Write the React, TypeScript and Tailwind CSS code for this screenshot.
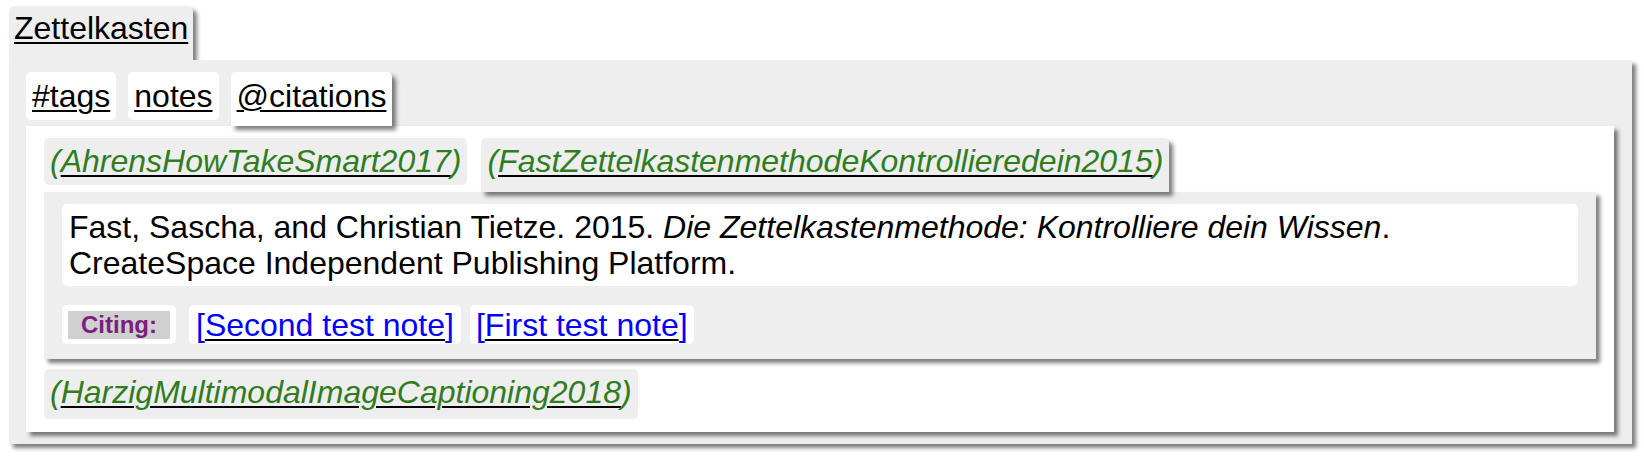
import React from "react";

const green = "text-[#2f7d1f]";

function CiteLabel({ name }: { name: string }) {
  return (
    <span className={`italic ${green}`}>
      <span>(</span>
      <span className="underline decoration-black decoration-2 underline-offset-[3px]">{name}</span>
      <span>)</span>
    </span>
  );
}

function NoteLink({ name }: { name: string }) {
  return (
    <span className="text-[#0000ff]">
      <span>[</span>
      <span className="underline decoration-black decoration-2 underline-offset-[3px]">{name}</span>
      <span>]</span>
    </span>
  );
}

export default function App() {
  return (
    <div
      className="bg-white pt-[6px] pl-[9px] pr-[12px] pb-[10px] text-black text-[32px] leading-[36px]"
      style={{ fontFamily: '"Liberation Sans", Arial, sans-serif' }}
    >
      {/* Top tab */}
      <div className="w-fit h-[54px] bg-[#eeeeee] rounded-t-[5px] px-[5px] pt-[4px] shadow-[4px_4px_4px_rgba(0,0,0,0.5)]">
        <span className="underline decoration-2 underline-offset-[3px]">Zettelkasten</span>
      </div>

      {/* Outer panel */}
      <div className="bg-[#eeeeee] pt-[12px] pl-[17px] pr-[18px] pb-[12px] shadow-[4px_4px_4px_rgba(0,0,0,0.5)]">
        <div className="flex items-start gap-[12px]">
          <div className="bg-white rounded-[5px] px-[6px] pt-[6px] h-[48px]">
            <span className="underline decoration-2 underline-offset-[3px]">#tags</span>
          </div>
          <div className="bg-white rounded-[5px] px-[6px] pt-[6px] h-[48px]">
            <span className="underline decoration-2 underline-offset-[3px]">notes</span>
          </div>
          <div className="bg-white rounded-t-[5px] px-[6px] pt-[6px] h-[54px] shadow-[4px_4px_4px_rgba(0,0,0,0.5)]">
            <span className="underline decoration-2 underline-offset-[3px]">@citations</span>
          </div>
        </div>

        {/* Inner white panel */}
        <div className="bg-white pt-[12px] pl-[18px] pr-[18px] pb-[13px] shadow-[4px_4px_4px_rgba(0,0,0,0.5)]">
          <div className="flex items-start gap-[14px]">
            <div className="bg-[#eeeeee] rounded-[5px] px-[6px] pt-[5px] h-[47px]">
              <CiteLabel name="AhrensHowTakeSmart2017" />
            </div>
            <div className="bg-[#eeeeee] rounded-t-[5px] px-[6px] pt-[5px] h-[54px] shadow-[4px_4px_4px_rgba(0,0,0,0.5)]">
              <CiteLabel name="FastZettelkastenmethodeKontrollieredein2015" />
            </div>
          </div>

          {/* Note panel */}
          <div className="bg-[#eeeeee] pt-[12px] pl-[18px] pr-[18px] pb-[15px] shadow-[4px_4px_4px_rgba(0,0,0,0.5)]">
            <div className="bg-white rounded-[5px] px-[7px] py-[5px]">
              Fast, Sascha, and Christian Tietze. 2015.{" "}
              <i>Die Zettelkastenmethode: Kontrolliere dein Wissen</i>. CreateSpace Independent
              Publishing Platform.
            </div>
            <div className="mt-[19px] flex items-center">
              <div className="bg-white rounded-[5px] h-[39px] px-[6px] flex items-center">
                <span className="bg-[#d0d0d0] h-[28px] px-[13px] text-[24px] leading-[28px] font-bold text-[#7a1f7d]">
                  Citing:
                </span>
              </div>
              <div className="ml-[13px] bg-white rounded-[5px] h-[39px] px-[7px] flex items-center">
                <NoteLink name="Second test note" />
              </div>
              <div className="ml-[9px] bg-white rounded-[5px] h-[39px] px-[6px] flex items-center">
                <NoteLink name="First test note" />
              </div>
            </div>
          </div>

          <div className="mt-[10px] w-fit bg-[#eeeeee] rounded-[5px] px-[6px] pt-[5px] h-[50px]">
            <CiteLabel name="HarzigMultimodalImageCaptioning2018" />
          </div>
        </div>
      </div>
    </div>
  );
}
